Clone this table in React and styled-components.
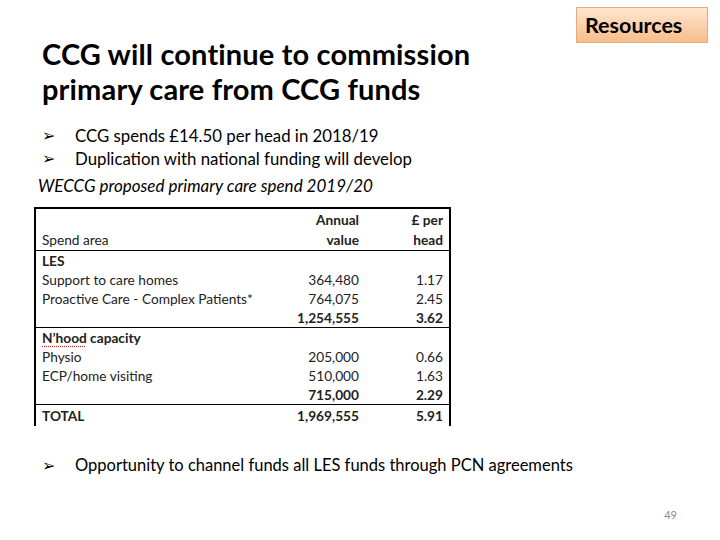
import React from "react";
import styled, { createGlobalStyle } from "styled-components";

const Global = createGlobalStyle`
  html, body { margin: 0; padding: 0; background: #fff; }
  body { font-family: Lato, "Open Sans", sans-serif; color: #000; }
`;

const Slide = styled.div`
  width: 720px;
  height: 540px;
  position: relative;
  overflow: hidden;
  background: #fff;
  display: flex;
  flex-direction: column;
`;

const Header = styled.div`
  display: flex;
  justify-content: space-between;
  align-items: flex-start;
  padding: 7px 12px 0 42px;
`;

const Title = styled.h1`
  margin: 29px 0 0;
  font-family: Lato, sans-serif;
  font-weight: 700;
  font-size: 29px;
  line-height: 35px;
  letter-spacing: 0.15px;
`;

const Badge = styled.div`
  width: 132px;
  height: 36px;
  box-sizing: border-box;
  display: flex;
  align-items: center;
  padding-left: 8px;
  background: linear-gradient(#fde6d2, #f8bd8a);
  border: 1px solid #e2ad7c;
  font-family: Lato, sans-serif;
  font-weight: 700;
  font-size: 21.5px;
`;

const Bullets = styled.ul`
  list-style: none;
  margin: 18px 0 0;
  padding: 0 0 0 42px;
`;

const Bullet = styled.li`
  display: flex;
  align-items: center;
  font-size: ${(p) => p.size || 16.8}px;
  line-height: 23px;
`;

const Arrow = styled.span`
  font-family: "DejaVu Sans", sans-serif;
  font-size: 16px;
  width: 33px;
  flex: none;
`;

const Caption = styled.div`
  margin: 5px 0 0 38px;
  font-style: italic;
  font-size: 17px;
  line-height: 22px;
`;

const TableBox = styled.div`
  margin: 10px 0 0 34px;
  width: 417px;
  height: 219px;
  box-sizing: border-box;
  border: 2px solid #000;
  border-bottom: none;
  overflow: hidden;
`;

const Table = styled.table`
  width: 413px;
  table-layout: fixed;
  border-collapse: collapse;
  font-family: Lato, sans-serif;
  font-size: 13.7px;
  color: #222;
`;

const Row = styled.tr`
  height: ${(p) => p.h || 19}px;
  border-bottom: ${(p) => (p.line ? "1.5px solid #000" : "none")};
  & > td {
    padding: 0 6px;
    vertical-align: middle;
  }
`;

const Cell = styled.td`
  text-align: ${(p) => (p.num ? "right" : "left")};
  font-weight: ${(p) => (p.bold ? 700 : 400)};
  white-space: nowrap;
  overflow: visible;
`;

const Squiggle = styled.span`
  text-decoration: underline dotted #d03030;
  text-underline-offset: 3px;
`;

const Footer = styled.div`
  margin: 28px 0 0 42px;
`;

const PageNo = styled.div`
  position: absolute;
  right: 43px;
  bottom: 19px;
  font-size: 11px;
  color: #8c8c8c;
`;

const rows = [
  { a: "LES", bold: true, h: 20 },
  { a: "Support to care homes", v: "364,480", pc: "1.17" },
  { a: "Proactive Care - Complex Patients*", v: "764,075", pc: "2.45" },
  { a: "", v: "1,254,555", pc: "3.62", bold: true, line: true },
  { a: <Squiggle>N’hood</Squiggle>, tail: " capacity", bold: true, h: 20 },
  { a: "Physio", v: "205,000", pc: "0.66" },
  { a: "ECP/home visiting", v: "510,000", pc: "1.63" },
  { a: "", v: "715,000", pc: "2.29", bold: true, line: true },
  { a: "TOTAL", v: "1,969,555", pc: "5.91", bold: true, h: 23 },
];

export default function App() {
  return (
    <Slide>
      <Global />
      <Header>
        <Title>
          CCG will continue to commission
          <br />
          primary care from CCG funds
        </Title>
        <Badge>Resources</Badge>
      </Header>
      <Bullets>
        <Bullet>
          <Arrow>➢</Arrow>CCG spends £14.50 per head in 2018/19
        </Bullet>
        <Bullet>
          <Arrow>➢</Arrow>Duplication with national funding will develop
        </Bullet>
      </Bullets>
      <Caption>WECCG proposed primary care spend 2019/20</Caption>
      <TableBox>
        <Table>
          <colgroup>
            <col style={{ width: 230 }} />
            <col style={{ width: 99 }} />
            <col style={{ width: 84 }} />
          </colgroup>
          <tbody>
            <Row h={20}>
              <Cell />
              <Cell num bold>Annual</Cell>
              <Cell num bold>£ per</Cell>
            </Row>
            <Row h={21} line>
              <Cell>Spend area</Cell>
              <Cell num bold>value</Cell>
              <Cell num bold>head</Cell>
            </Row>
            {rows.map((r, i) => (
              <Row key={i} h={r.h} line={r.line}>
                <Cell bold={r.bold}>
                  {r.a}
                  {r.tail}
                </Cell>
                <Cell num bold={r.bold}>{r.v}</Cell>
                <Cell num bold={r.bold}>{r.pc}</Cell>
              </Row>
            ))}
          </tbody>
        </Table>
      </TableBox>
      <Footer>
        <Bullet size={16.5}>
          <Arrow>➢</Arrow>Opportunity to channel funds all LES funds through PCN agreements
        </Bullet>
      </Footer>
      <PageNo>49</PageNo>
    </Slide>
  );
}
